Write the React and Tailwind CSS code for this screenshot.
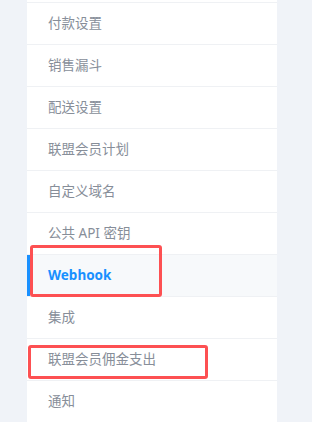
import React from "react";

const items = [
  "付款设置",
  "销售漏斗",
  "配送设置",
  "联盟会员计划",
  "自定义域名",
  "公共 API 密钥",
  "Webhook",
  "集成",
  "联盟会员佣金支出",
  "通知",
];

const App = () => {
  const active = "Webhook";

  return (
    <div
      className="relative w-[312px] h-[422px] overflow-hidden bg-[#f0f3f8] pl-[27px] pr-[35px]"
      style={{ fontFamily: '"Noto Sans", "Noto Sans CJK SC", sans-serif' }}
    >
      <div className="h-full bg-white">
        <div className="h-[2px]" />
        {items.map((label) => (
          <div
            key={label}
            className={`relative h-[42px] border-t border-[#eff1f4] flex items-center pl-[21px] text-[13.5px] ${
              label === active
                ? "bg-[#f7f9fb] text-[#1990ff] font-bold"
                : "text-[#878e99]"
            }`}
          >
            {label === active && (
              <span className="absolute left-0 top-0 bottom-0 w-[3px] bg-[#1990ff]" />
            )}
            {label}
          </div>
        ))}
      </div>

      {/* annotation boxes */}
      <div className="absolute left-[30px] top-[245px] w-[132px] h-[52px] border-[3px] border-[#fd5052] rounded-[3px]" />
      <div className="absolute left-[28px] top-[345px] w-[180px] h-[34px] border-[3px] border-[#fd5052] rounded-[3px]" />
    </div>
  );
};

export default App;
